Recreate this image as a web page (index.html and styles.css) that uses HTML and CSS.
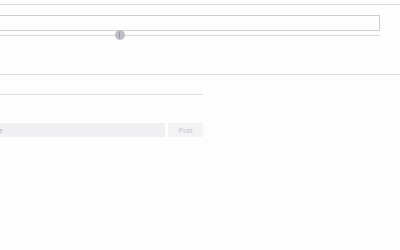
FILE: index.html
```html
<!DOCTYPE html>
<html lang="en">
<head>
  <meta charset="UTF-8" />
  <meta name="viewport" content="width=device-width, initial-scale=1.0"/>
  <title>Thread</title>
  <link rel="stylesheet" href="styles.css">
</head>
<body>
  <div class="page">
    <div class="toolbar">
      <div class="field"></div>
      <div class="track">
        <span class="thumb"></span>
      </div>
    </div>
    <div class="thread">
      <div class="composer">
        <input class="message" type="text" placeholder="Write a message">
        <button class="post" type="button">Post</button>
      </div>
    </div>
  </div>
</body>
</html>
```

FILE: styles.css
```css
body {
  margin: 0;
  background: #fdfdfd;
  font-family: "Liberation Sans", Arial, sans-serif;
  overflow: hidden;
}
.page {
  padding-top: 4px;
}
.toolbar {
  border-top: 1px solid #dcdcdc;
  border-bottom: 1px solid #dcdcdc;
  padding: 10px 20px 38px 0;
  height: 21px;
}
.field {
  height: 14px;
  margin-left: -10px;
  border: 1px solid #cfcfcf;
  background: #fdfdfd;
}
.track {
  position: relative;
  margin-top: 4px;
  height: 1px;
  background: #d6d6d6;
}
.thumb {
  position: absolute;
  left: 115px;
  top: -5px;
  width: 10px;
  height: 10px;
  border-radius: 50%;
  background: #bdbec2;
}
.thumb::after {
  content: "";
  position: absolute;
  left: 4px;
  top: 2px;
  width: 1px;
  height: 6px;
  background: #8a9bb0;
}
.thread {
  width: 203px;
  margin-top: 19px;
  border-top: 1px solid #e6dcdc;
  padding-top: 28px;
}
.composer {
  display: flex;
  gap: 3px;
}
.message {
  width: 219px;
  margin-left: -54px;
  height: 14px;
  padding: 0 4px;
  border: none;
  background: #f0eff2;
  font-family: inherit;
  font-size: 7px;
  color: #999;
  box-sizing: border-box;
  outline: none;
}
.message::placeholder {
  color: #aaa;
}
.post {
  width: 35px;
  height: 14px;
  padding: 0;
  border: none;
  background: #f3f2f4;
  color: #c8c8cc;
  font-family: inherit;
  font-size: 7px;
}
```
